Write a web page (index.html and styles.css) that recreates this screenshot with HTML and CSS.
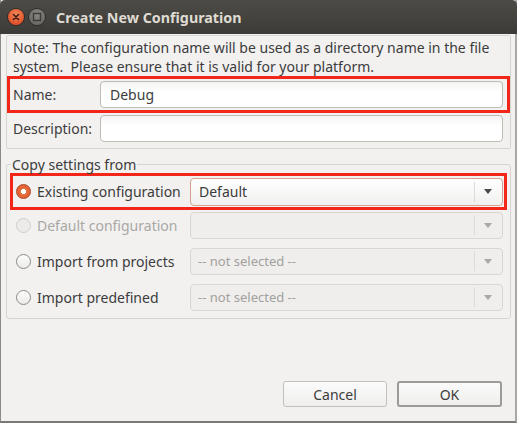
FILE: index.html
```html
<!DOCTYPE html>
<html>
<head>
<meta charset="utf-8">
<link rel="stylesheet" href="styles.css">
</head>
<body>
<div class="window">
  <div class="titlebar">
    <div class="tb-btn close"><svg width="16" height="16" viewBox="0 0 16 16"><path d="M5.5 5.5 L10.5 10.5 M10.5 5.5 L5.5 10.5" stroke="#3a1a10" stroke-width="1.6" stroke-linecap="round"/></svg></div>
    <div class="tb-btn max"><svg width="16" height="16" viewBox="0 0 16 16"><rect x="4.5" y="4.5" width="7" height="7" fill="none" stroke="#3c3b37" stroke-width="1.4"/></svg></div>
    <div class="title">Create New Configuration</div>
  </div>
  <div class="content">
    <div class="panel">
      <div class="note">Note: The configuration name will be used as a directory name in the file<br>system.&nbsp; Please ensure that it is valid for your platform.</div>
      <div class="field-row highlight name-row">
        <span class="field-label">Name:</span>
        <div class="input">Debug</div>
      </div>
      <div class="field-row desc-row">
        <span class="field-label">Description:</span>
        <div class="input"></div>
      </div>
    </div>
    <fieldset class="group">
      <legend>Copy settings from</legend>
      <div class="opt-row highlight">
        <span class="radio checked"></span>
        <span class="opt-label">Existing configuration</span>
        <div class="combo focus"><span class="combo-text">Default</span><span class="sep"></span><span class="arrow"></span></div>
      </div>
      <div class="opt-row disabled">
        <span class="radio"></span>
        <span class="opt-label">Default configuration</span>
        <div class="combo off"><span class="combo-text"></span><span class="sep"></span><span class="arrow"></span></div>
      </div>
      <div class="opt-row">
        <span class="radio"></span>
        <span class="opt-label">Import from projects</span>
        <div class="combo off"><span class="combo-text dim">-- not selected --</span><span class="sep"></span><span class="arrow"></span></div>
      </div>
      <div class="opt-row">
        <span class="radio"></span>
        <span class="opt-label">Import predefined</span>
        <div class="combo off"><span class="combo-text dim">-- not selected --</span><span class="sep"></span><span class="arrow"></span></div>
      </div>
    </fieldset>
    <div class="buttons">
      <div class="btn">Cancel</div>
      <div class="btn default">OK</div>
    </div>
  </div>
</div>
</body>
</html>
```
FILE: styles.css
```css
html, body { margin: 0; padding: 0; background: #f2f1f0; }
body { font-family: "Noto Sans", "DejaVu Sans", sans-serif; font-size: 14px; color: #3c3c3c; }
.window {
  width: 517px; height: 423px; box-sizing: border-box;
  background: #f2f1f0;
  border-left: 1px solid #8c8a86; border-right: 2px solid #a9a7a3; border-bottom: 2px solid #7b7975;
  display: flex; flex-direction: column;
}
.titlebar {
  height: 34px; flex: none;
  background: linear-gradient(#4c4b46, #3c3b37);
  border-radius: 5px 5px 0 0;
  display: flex; align-items: center;
  padding-left: 8px; box-sizing: border-box;
  margin-left: -1px; margin-right: -2px;
}
.tb-btn {
  width: 16px; height: 16px; border-radius: 50%;
  display: flex; align-items: center; justify-content: center;
  margin-right: 5px;
}
.close { background: radial-gradient(circle at 50% 35%, #f58a5c, #e0502a 70%); box-shadow: 0 0 0 1px #2e2d29; }
.max { background: radial-gradient(circle at 50% 35%, #8a8984, #6b6a65 70%); box-shadow: 0 0 0 1px #2e2d29; }
.title {
  margin-left: 6px; color: #dfdbd2; font-weight: bold; font-size: 14.3px;
}
.content {
  flex: 1; display: flex; flex-direction: column;
  padding: 1px 4px 0 5px;
}
.panel {
  height: 114px; box-sizing: border-box;
  border: 1px solid #d6d4d0; border-radius: 2px;
  padding: 2px 0 0 0;
  display: flex; flex-direction: column;
}
.note { padding-left: 6px; line-height: 19px; white-space: nowrap; }
.field-row { display: flex; align-items: center; height: 27px; }
.field-row .field-label { width: 87px; padding-left: 6px; }
.field-row .input {
  flex: none; width: 403px; height: 27px; box-sizing: border-box;
  border: 1px solid #bebcb7; border-radius: 4px;
  background: linear-gradient(#f4f4f3, #ffffff 40%);
  display: flex; align-items: center; padding-left: 9px; color: #3c3c3c;
}
.highlight { border: 3px solid #f3261a; box-sizing: border-box; }
.name-row { height: 37px; }
.name-row .field-label { padding-left: 3px; }
.desc-row { margin-top: 2px; }
.group {
  margin: 8px 0 0 0; padding: 0 3px 7px 3px;
  border: 1px solid #d6d4d0; border-radius: 3px;
  min-width: 0;
}
.group legend { padding: 0 1px; margin-left: 1px; color: #3c3c3c; line-height: 15px; }
.opt-row { display: flex; align-items: center; height: 28px; margin-top: 8px; padding-left: 6px; }
.opt-row.highlight { height: 37px; margin-top: 1px; padding-left: 3px; padding-right: 1px; }
.opt-row.disabled { margin-top: 1px; }
.radio {
  width: 15px; height: 15px; box-sizing: border-box; border-radius: 50%;
  border: 1px solid #8d8b86; background: linear-gradient(#fdfdfd, #ebeae8);
  flex: none; margin-right: 6px;
}
.radio.checked {
  border: 1px solid #b1441d;
  background: radial-gradient(circle, #ffffff 0 2.3px, #e86d3f 2.8px, #d85a2c 100%);
}
.disabled .radio { border-color: #d0cec9; background: #ecebe9; }
.opt-label { width: 153px; flex: none; white-space: nowrap; }
.disabled .opt-label { color: #a9a8a5; }
.combo {
  flex: none; width: 313px; height: 28px; box-sizing: border-box;
  border: 1px solid #c4c2bd; border-radius: 4px;
  background: linear-gradient(#fafafa, #efeeed);
  display: flex; align-items: center;
}
.combo.focus { border-color: #d5a08e; background: linear-gradient(#ffffff, #f1f0ef); }
.combo.off { background: #efeeec; border-color: #d9d7d3; height: 27px; }
.combo-text { flex: 1; padding-left: 8px; }
.combo-text.dim { color: #a2a19e; padding-left: 7px; font-size: 13px; }
.sep { width: 1px; height: 20px; background: #dcdad6; margin-right: 9px; }
.arrow {
  width: 0; height: 0; border-left: 4px solid transparent; border-right: 4px solid transparent;
  border-top: 5px solid #4a4a4a; margin-right: 10px;
}
.off .arrow { border-top-color: #a9a8a5; }
.buttons {
  margin-top: auto; margin-bottom: 14px;
  display: flex; justify-content: flex-end; gap: 10px; padding-right: 9px;
}
.btn {
  width: 104px; height: 26px; box-sizing: border-box;
  border: 1px solid #c2c0bb; border-radius: 3px;
  background: linear-gradient(#fbfbfb, #efeeed);
  display: flex; align-items: center; justify-content: center; color: #3c3c3c;
}
.btn.default { border: 2px solid #9d9b97; width: 105px; }
```
